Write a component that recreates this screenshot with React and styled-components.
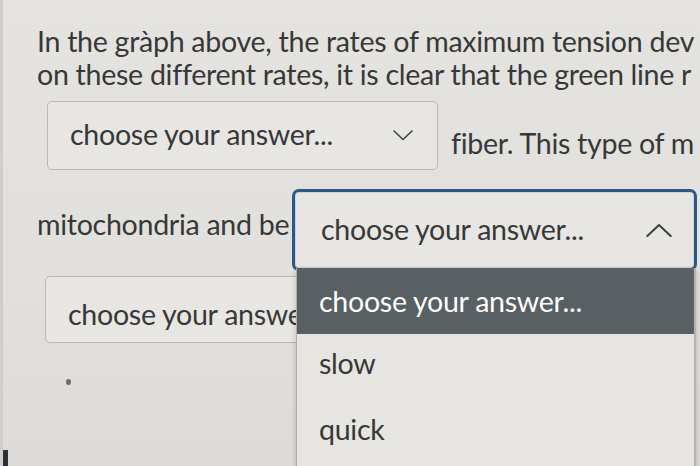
import React from 'react';
import styled, { createGlobalStyle } from 'styled-components';

const GlobalStyle = createGlobalStyle`
  html, body {
    margin: 0;
    padding: 0;
    background: #e2e1de;
    overflow: hidden;
  }
`;

const Page = styled.div`
  position: relative;
  width: 700px;
  height: 466px;
  box-sizing: border-box;
  padding: 25px 0 0 34px;
  overflow: hidden;
  background: linear-gradient(180deg, #e4e3e0 0%, #e1e0dd 60%, #dcdbd8 100%);
  border-left: 3px solid #cfceca;
  font-family: Lato, "Open Sans", sans-serif;
  font-size: 28.6px;
  color: #383838;
  white-space: nowrap;
`;

const Paragraph = styled.div`
  line-height: 33px;
  letter-spacing: -0.3px;
`;

const Row = styled.div`
  display: flex;
  align-items: center;
  margin-top: ${(p) => p.gap}px;
  margin-left: ${(p) => p.indent || 0}px;
`;

const InlineText = styled.span`
  display: block;
  width: ${(p) => (p.width ? `${p.width}px` : 'auto')};
  overflow: hidden;
  margin-left: ${(p) => p.before || 0}px;
  margin-top: ${(p) => p.shift || 0}px;
  letter-spacing: -0.3px;
`;

const SelectBox = styled.div`
  display: flex;
  align-items: center;
  justify-content: space-between;
  box-sizing: border-box;
  width: ${(p) => p.width}px;
  height: ${(p) => p.height}px;
  padding: 0 24px 0 22px;
  background: #e7e6e3;
  border: 1px solid #b9b8b4;
  border-radius: 5px;
  flex-shrink: 0;
`;

const FocusedSelect = styled(SelectBox)`
  border: 3px solid #2b5886;
  border-radius: 7px;
  box-shadow: inset 0 0 0 1px #c9d3dd;
  padding: 0 22px 0 26px;
`;

const SelectText = styled.span`
  letter-spacing: -0.3px;
  margin-top: ${(p) => p.shift || 0}px;
`;

const Menu = styled.div`
  position: absolute;
  left: 293px;
  top: 268px;
  width: 397px;
  height: 210px;
  background: #e6e5e2;
  border-left: 1px solid #aeadaa;
  border-right: 2px solid #b3b2ae;
  box-shadow: 0 2px 6px rgba(0, 0, 0, 0.18);
`;

const Option = styled.div`
  display: flex;
  align-items: center;
  height: ${(p) => p.height}px;
  padding-left: 22px;
  background: ${(p) => (p.active ? '#586063' : 'transparent')};
  color: ${(p) => (p.active ? '#ffffff' : '#383838')};
  letter-spacing: -0.3px;
`;

const Speck = styled.div`
  position: absolute;
  left: 63px;
  top: 379px;
  width: 5px;
  height: 6px;
  border-radius: 50%;
  background: #7a6660;
`;

const Corner = styled.div`
  position: absolute;
  left: 0;
  top: 450px;
  width: 5px;
  height: 16px;
  background: #2c2f33;
`;

const Chevron = ({ up, size = 20 }) => (
  <svg width={size} height={size * 0.55} viewBox="0 0 20 11" fill="none">
    <path
      d={up ? 'M1 10 L10 1.5 L19 10' : 'M1 1 L10 9.5 L19 1'}
      stroke="#3d4348"
      strokeWidth="1.6"
      strokeLinecap="round"
      strokeLinejoin="round"
    />
  </svg>
);

export default function App() {
  return (
    <>
      <GlobalStyle />
      <Page>
        <Paragraph>
          <div>In the gràph above, the rates of maximum tension dev</div>
          <div>on these different rates, it is clear that the green line r</div>
        </Paragraph>

        <Row gap={10} indent={10}>
          <SelectBox width={391} height={69}>
            <SelectText shift={-4}>choose your answer...</SelectText>
            <Chevron />
          </SelectBox>
          <InlineText before={13} shift={14}>fiber. This type of m</InlineText>
        </Row>

        <Row gap={19}>
          <InlineText width={255} shift={-12}>mitochondria and be</InlineText>
          <FocusedSelect width={405} height={82}>
            <SelectText shift={-2}>choose your answer...</SelectText>
            <Chevron up size={26} />
          </FocusedSelect>
        </Row>

        <Row gap={5} indent={8}>
          <SelectBox width={391} height={67}>
            <SelectText shift={8}>choose your answer...</SelectText>
          </SelectBox>
        </Row>

        <Menu>
          <Option active height={66}>choose your answer...</Option>
          <Option height={58}>slow</Option>
          <Option height={74}>quick</Option>
        </Menu>

        <Speck />
        <Corner />
      </Page>
    </>
  );
}
